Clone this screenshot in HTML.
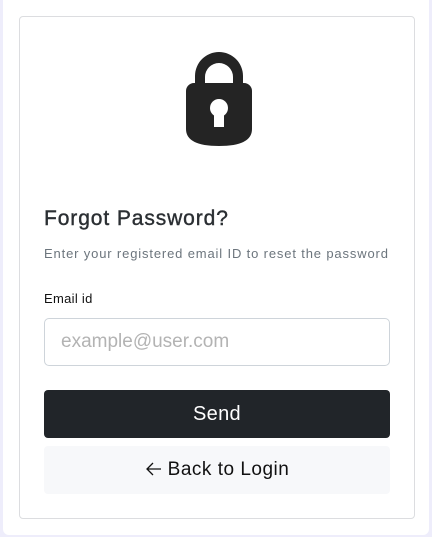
<!DOCTYPE html><html><head><style>
body{margin:0;background:#eeedfb;font-family:"Liberation Sans",sans-serif;}
.panel{position:absolute;left:3px;top:0;width:426px;height:535px;background:#fff;border-radius:0 0 6px 6px}
.card{position:absolute;left:19px;top:16px;border:1px solid #dcdde0;border-radius:4px;box-sizing:border-box;width:396px;height:503px}
.abs{position:absolute}
</style></head><body>
<div class="panel"></div>
<div class="card"></div>
<svg class="abs" style="left:186px;top:51px" width="66" height="96" viewBox="0 0 66 96">
<path d="M9 33 V25 A24 24 0 0 1 57 25 V33 H47 V26 A14 14 0 0 0 19 26 V33 Z" fill="#242424"/>
<path d="M0 40 A8 8 0 0 1 8 32 H58 A8 8 0 0 1 66 40 V78 Q66 95 33 95 Q0 95 0 78 Z" fill="#242424"/>
<circle cx="33" cy="57" r="9" fill="#fff"/>
<rect x="28" y="60" width="10" height="16" fill="#fff"/>
</svg>
<div class="abs" style="left:44px;top:207px;font-size:21px;color:#2b2f33;letter-spacing:0.9px;-webkit-text-stroke:0.4px #2b2f33">Forgot Password?</div>
<div class="abs" style="left:44px;top:246px;font-size:13px;color:#6c757d;letter-spacing:0.85px">Enter your registered email ID to reset the password</div>
<div class="abs" style="left:44px;top:291px;font-size:13px;color:#111;letter-spacing:0.3px">Email id</div>
<div class="abs" style="left:44px;top:318px;width:346px;height:48px;border:1px solid #ced4da;border-radius:5px;box-sizing:border-box;font-size:19px;color:#b3b3b3;padding:12px 0 0 16px">example@user.com</div>
<div class="abs" style="left:44px;top:390px;width:346px;height:48px;background:#212529;border-radius:4px;color:#fff;font-size:20px;text-align:center;line-height:48px;letter-spacing:0.3px">Send</div>
<div class="abs" style="left:44px;top:446px;width:346px;height:48px;background:#f7f8fa;border-radius:4px;color:#111;font-size:19px;text-align:center;line-height:48px;letter-spacing:0.5px"><svg width="18" height="14" viewBox="0 0 18 14" style="vertical-align:-1px;margin-right:5px"><path d="M16 7H2M8 1L2 7L8 13" fill="none" stroke="#111" stroke-width="1.3"/></svg>Back to Login</div>
</body></html>
